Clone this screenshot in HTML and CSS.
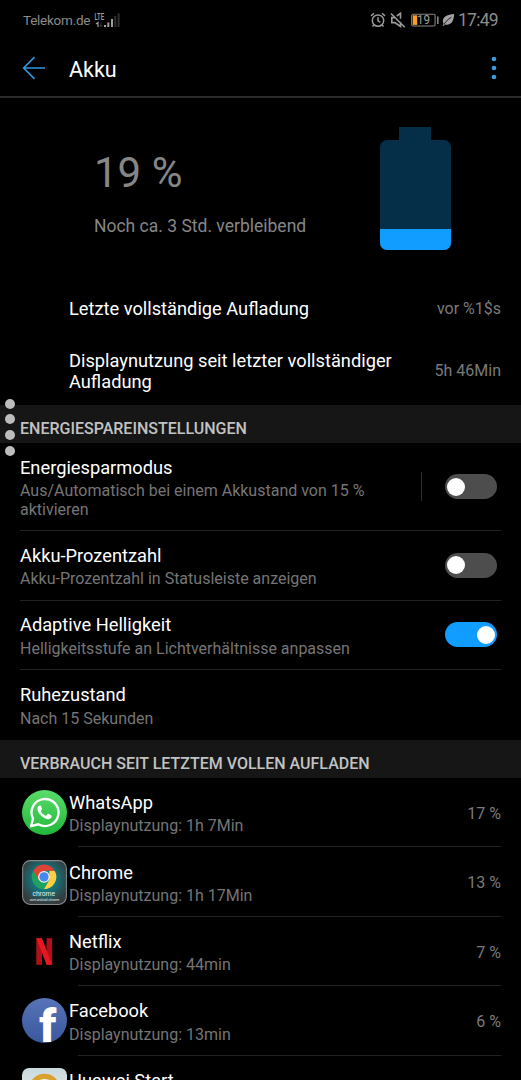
FILE: index.html
```html
<!DOCTYPE html>
<html lang="de">
<head>
  <meta charset="UTF-8">
  <title>Akku</title>
  <link rel="stylesheet" href="styles.css">
</head>
<body>

  <div class="statusbar">
    <span class="carrier">Telekom.de</span>
    <svg class="signal" width="28" height="18" viewBox="0 0 28 18">
      <text class="lte" x="0.5" y="8" textLength="9.5" lengthAdjust="spacingAndGlyphs">LTE</text>
      <path d="M2 12l2-1.6v4.6" fill="none" stroke="#a0a0a0" stroke-width="1.2"/>
      <path d="M7 10.5v4M5.8 13l1.2 1.6 1.2-1.6" fill="none" stroke="#3c3c3c"/>
      <rect x="10" y="13" width="2" height="2" fill="#a0a0a0"/>
      <rect x="13.3" y="10.5" width="2" height="4.5" fill="#a0a0a0"/>
      <rect x="17" y="7" width="2" height="8" fill="#a0a0a0"/>
      <rect x="20.3" y="4" width="2" height="11" fill="#303030"/>
      <rect x="23.6" y="1.5" width="2" height="13.5" fill="#303030"/>
    </svg>
    <div class="status-right">
      <svg width="16" height="16" viewBox="0 0 16 16" fill="none" stroke="#9a9a9a" stroke-width="1.5">
        <circle cx="8" cy="8.6" r="5.7"/>
        <path d="M8 5.2v3.6l2.3 1.6M1 3.9l3-2.6M15 3.9l-3-2.6M3.9 12.9l-1.4 1.7M12.1 12.9l1.4 1.7"/>
      </svg>
      <svg width="16" height="16" viewBox="0 0 16 16" fill="none" stroke="#9a9a9a" stroke-width="1.6">
        <path d="M4.5 5.6H1.8v5h3l5.7 3.9v-4.6M6.8 4l3.7-2.6v5.4M1 1.5l13.7 13.7"/>
      </svg>
      <svg class="status-battery" width="28" height="14" viewBox="0 0 28 14">
        <rect x="0.7" y="1.2" width="23.4" height="11.8" rx="1.6" fill="none" stroke="#858585" stroke-width="1.1"/>
        <rect x="1.8" y="2.3" width="4.4" height="9.6" fill="#ff9b1e"/>
        <rect x="26" y="3.5" width="1.6" height="7.5" fill="#858585"/>
        <text class="status-percent" x="6" y="11.4" textLength="13" lengthAdjust="spacingAndGlyphs">19</text>
      </svg>
      <svg width="13" height="14" viewBox="0 0 13 14">
        <path d="M12.2 1C5.5 1.5.8 3.6.9 8.3c0 1 .3 1.700.6 2.300L.7 12.600l1.100.4 1-1.600c5 1.400 8.900-1.500 9.400-10.400z" fill="#a3a3a3"/>
        <path d="M2 11.5C4 8.2 6.200 6 9.300 4.300" fill="none" stroke="#000" stroke-width=".8"/>
      </svg>
      <span class="clock">17:49</span>
    </div>
  </div>

  <header class="appbar">
    <svg width="24" height="24" viewBox="0 0 24 24" fill="none" stroke="#2f96de" stroke-width="1.7">
      <path d="M12.5 1.2L1.7 12l10.800 10.800M1.700 12H23"/>
    </svg>
    <h1>Akku</h1>
    <svg class="menu" width="6" height="24" viewBox="0 0 6 24" fill="#3a9be0">
      <circle cx="3" cy="3" r="2.3"/>
      <circle cx="3" cy="12" r="2.3"/>
      <circle cx="3" cy="21" r="2.3"/>
    </svg>
  </header>

  <section class="overview">
    <div>
      <div class="percent">19 %</div>
      <div class="remaining">Noch ca. 3 Std. verbleibend</div>
    </div>
    <div class="battery">
      <div class="battery-cap"></div>
      <div class="battery-body"><div class="battery-level"></div></div>
    </div>
  </section>

  <div class="info info-charge">
    <span class="title">Letzte vollständige Aufladung</span>
    <span class="value">vor %1$s</span>
  </div>
  <div class="info info-display">
    <span class="title">Displaynutzung seit letzter vollständiger Aufladung</span>
    <span class="value">5h 46Min</span>
  </div>

  <h2 class="section">
    ENERGIESPAREINSTELLUNGEN
    <span class="edge-dots"><i></i><i></i><i></i><i></i></span>
  </h2>

  <div class="setting setting-tall">
    <div class="text">
      <div class="title">Energiesparmodus</div>
      <div class="sub">Aus/Automatisch bei einem Akkustand von 15 % aktivieren</div>
    </div>
    <div class="divider"></div>
    <div class="switch"></div>
  </div>
  <div class="setting">
    <div class="text">
      <div class="title">Akku-Prozentzahl</div>
      <div class="sub">Akku-Prozentzahl in Statusleiste anzeigen</div>
    </div>
    <div class="switch"></div>
  </div>
  <div class="setting">
    <div class="text">
      <div class="title">Adaptive Helligkeit</div>
      <div class="sub">Helligkeitsstufe an Lichtverhältnisse anpassen</div>
    </div>
    <div class="switch on"></div>
  </div>
  <div class="setting last">
    <div class="text">
      <div class="title">Ruhezustand</div>
      <div class="sub">Nach 15 Sekunden</div>
    </div>
  </div>

  <h2 class="section">VERBRAUCH SEIT LETZTEM VOLLEN AUFLADEN</h2>

  <div class="app">
    <svg class="icon" viewBox="0 0 44 44">
      <defs>
        <linearGradient id="wa" x1="0" y1="0" x2="0" y2="1">
          <stop offset="0" stop-color="#58dc68"/>
          <stop offset="1" stop-color="#22b83c"/>
        </linearGradient>
      </defs>
      <circle cx="22" cy="22" r="22" fill="url(#wa)"/>
      <path d="M8.8 35.4l2-7.3A13.2 13.2 0 1 1 16 33.5z" fill="none" stroke="#fff" stroke-width="2.3" stroke-linejoin="round"/>
      <path d="M17.2 15.2c-1.2.3-2.2 1.7-2.1 3.3.3 4.3 6.3 10 10.5 10 2 0 3.5-1.4 3.5-3.1 0-.6-3.1-2.3-3.7-2.2-.7.1-1.3 1.9-2 1.9-1.2 0-4.9-3.3-5-4.4 0-.7 1.2-1.2 1.2-2 0-.6-1-3.4-1.5-3.5-.3-.1-.6-.1-.9 0z" fill="#fff"/>
    </svg>
    <div class="app-row">
      <div class="text">
        <div class="title">WhatsApp</div>
        <div class="sub">Displaynutzung: 1h 7Min</div>
      </div>
      <span class="value">17 %</span>
    </div>
  </div>
  <div class="app">
    <svg class="icon" viewBox="0 0 44 44">
      <defs>
        <radialGradient id="glow" cx=".5" cy=".42" r=".58">
          <stop offset="0" stop-color="#08a6ad"/>
          <stop offset=".5" stop-color="#167076"/>
          <stop offset="1" stop-color="#363b3d"/>
        </radialGradient>
      </defs>
      <rect x=".6" y=".6" width="42.8" height="42.8" rx="7.5" fill="url(#glow)" stroke="#85898a" stroke-width="1"/>
      <path d="M11.1 10.5A12 12 0 0 0 21.5 28.5L26.5 20z" fill="#1da261"/>
      <path d="M31.9 10.5A12 12 0 0 1 21.5 28.5L26.7 19.5V10.5z" fill="#ffce43"/>
      <path d="M11.1 10.5A12 12 0 0 1 31.9 10.5H21.5L16.3 19.5z" fill="#dd4437"/>
      <circle cx="21.5" cy="16.5" r="5.8" fill="#f1f1f1"/>
      <circle cx="21.5" cy="16.5" r="4.5" fill="#4587ee"/>
      <text class="chrome-name" x="10.2" y="35" textLength="22" lengthAdjust="spacingAndGlyphs">chrome</text>
      <text class="chrome-package" x="7.5" y="40" textLength="29" lengthAdjust="spacingAndGlyphs">com.android.chrome</text>
    </svg>
    <div class="app-row">
      <div class="text">
        <div class="title">Chrome</div>
        <div class="sub">Displaynutzung: 1h 17Min</div>
      </div>
      <span class="value">13 %</span>
    </div>
  </div>
  <div class="app">
    <svg class="icon" viewBox="0 0 44 44">
      <rect x="14" y="9" width="5.5" height="26" fill="#b0101a"/>
      <rect x="24" y="9" width="5.5" height="26" fill="#b0101a"/>
      <rect x="14" y="9" width="5.5" height="26" fill="#e51720" transform="matrix(1 0 .385 1 -3.46 0)"/>
    </svg>
    <div class="app-row">
      <div class="text">
        <div class="title">Netflix</div>
        <div class="sub">Displaynutzung: 44min</div>
      </div>
      <span class="value">7 %</span>
    </div>
  </div>
  <div class="app">
    <svg class="icon" viewBox="0 0 44 44">
      <defs>
        <linearGradient id="fb" x1="0" y1="0" x2="0" y2="1">
          <stop offset="0" stop-color="#5874b8"/>
          <stop offset="1" stop-color="#3b579d"/>
        </linearGradient>
      </defs>
      <circle cx="22" cy="22" r="22" fill="url(#fb)"/>
      <text class="fb" x="16.8" y="43.5">f</text>
    </svg>
    <div class="app-row">
      <div class="text">
        <div class="title">Facebook</div>
        <div class="sub">Displaynutzung: 13min</div>
      </div>
      <span class="value">6 %</span>
    </div>
  </div>
  <div class="app">
    <svg class="icon" viewBox="0 0 44 44">
      <defs>
        <linearGradient id="hw" x1="0" y1="0" x2="0" y2="1">
          <stop offset="0" stop-color="#c9d9df"/>
          <stop offset="1" stop-color="#f4f2ea"/>
        </linearGradient>
      </defs>
      <rect width="44" height="44" rx="7" fill="url(#hw)"/>
      <circle cx="22" cy="20.5" r="12.5" fill="#e8d9b0" stroke="#d9a12c" stroke-width="5"/>
      <circle cx="22" cy="15" r="4" fill="#f4efe2"/>
    </svg>
    <div class="app-row">
      <div class="text">
        <div class="title">Huawei Start</div>
      </div>
    </div>
  </div>

</body>
</html>
```
FILE: styles.css
```css
* {
  box-sizing: border-box;
}
html, body {
  height: 1080px;
  overflow: hidden;
}
body {
  margin: 0;
  background: #000;
  color: #fff;
  font-family: Roboto, sans-serif;
  font-size: 18.25px;
}
svg {
  display: block;
  flex: none;
  overflow: visible;
}
.statusbar {
  display: flex;
  align-items: center;
  height: 40px;
  padding: 0 23px;
  color: #8c8c8c;
}
.carrier {
  font-size: 13.5px;
  letter-spacing: -0.25px;
}
.signal {
  margin: 1px 0 0 4px;
}
.lte {
  font-size: 8.5px;
  font-weight: 500;
  fill: #a0a0a0;
}
.status-right {
  display: flex;
  align-items: center;
  gap: 4px;
  margin-left: auto;
}
.status-battery {
  margin-left: 1px;
}
.status-battery + svg {
  margin: 0 -1.5px 0 -1px;
}
.status-percent {
  font-size: 12px;
  fill: #a0a0a0;
}
.clock {
  font-size: 17.5px;
  letter-spacing: -0.7px;
  line-height: 20px;
}
.appbar {
  display: flex;
  align-items: center;
  height: 58px;
  padding: 0 24px 0 22px;
  border-bottom: 2px solid #2b2b2b;
}
h1 {
  margin: 2px 0 0 23px;
  font-size: 21.5px;
  font-weight: 400;
}
.menu {
  margin-left: auto;
}
.overview {
  display: flex;
  justify-content: space-between;
  height: 184px;
  padding: 29px 70.5px 0 94px;
  color: #868686;
}
.percent {
  margin-top: 21px;
  font-size: 42px;
  line-height: 50px;
}
.remaining {
  margin-top: 18px;
  font-size: 17.5px;
  line-height: 21px;
}
.battery {
  width: 71px;
}
.battery-cap {
  width: 32px;
  height: 13px;
  margin: 0 auto;
  background: #052f49;
}
.battery-body {
  display: flex;
  align-items: flex-end;
  height: 110px;
  border-radius: 7px;
  background: #052f49;
  overflow: hidden;
}
.battery-level {
  width: 100%;
  height: 21px;
  background: #109dff;
}
.info {
  display: flex;
  align-items: center;
  justify-content: space-between;
  padding: 0 20px 0 69px;
}
.info-charge {
  height: 54px;
}
.info-display {
  height: 68.5px;
  padding-top: 2px;
}
.info-display .title {
  width: 335px;
}
.title {
  line-height: 21.3px;
}
.sub, .value {
  font-size: 16px;
  line-height: 18.7px;
  color: #757575;
}
.value {
  color: #7a7a7a;
  white-space: nowrap;
}
.section {
  position: relative;
  height: 38.5px;
  margin: 0;
  padding: 14.4px 20px 0;
  background: #161616;
  color: #c2c2c2;
  font-size: 16px;
  font-weight: 500;
  line-height: 20px;
}
/* handle that floats over the left screen edge */
.edge-dots {
  position: absolute;
  top: -6px;
  left: 5px;
  display: flex;
  flex-direction: column;
  gap: 5.8px;
  z-index: 1;
}
.edge-dots i {
  width: 10px;
  height: 10px;
  border-radius: 50%;
  background: #bdbdbd;
}
.setting {
  display: flex;
  align-items: center;
  height: 69.5px;
  margin: 0 20px;
  padding-right: 4px;
  border-bottom: 1px solid #222;
}
.setting-tall {
  height: 88px;
}
.last {
  border-bottom: none;
}
.text {
  flex: 1;
  padding-top: 3px;
}
.sub {
  margin-top: 4px;
}
.divider {
  width: 1px;
  height: 29px;
  margin: 0 23px 0 20px;
  background: #2c2c2c;
}
.switch {
  display: flex;
  width: 52px;
  height: 25px;
  padding: 3.5px 2px;
  border-radius: 13px;
  background: #4d4d4d;
}
.switch::before {
  content: "";
  width: 18px;
  height: 18px;
  border-radius: 50%;
  background: #fff;
}
.on {
  justify-content: flex-end;
  background: #109dff;
}
.app {
  display: flex;
  align-items: center;
  height: 69.4px;
  padding-left: 22px;
}
.app:last-child {
  align-items: flex-start;
  padding-top: 12px;
}
.app:last-child .text {
  align-self: flex-start;
  padding-top: 2px;
}
.icon {
  width: 45px;
  height: 45px;
}
.app-row {
  display: flex;
  flex: 1;
  align-items: center;
  height: 100%;
  margin-right: 20px;
  padding-left: 2px;
  background: linear-gradient(#222, #222) 11px 100% / 100% 1px no-repeat;
}
.app-row .value {
  padding-top: 3px;
}
.chrome-name {
  font-size: 7.5px;
  fill: #e6eeee;
}
.chrome-package {
  font-size: 3.5px;
  fill: #e6eeee;
}
.fb {
  font-family: Roboto, sans-serif;
  font-size: 46px;
  font-weight: 900;
  fill: #fff;
}
```
